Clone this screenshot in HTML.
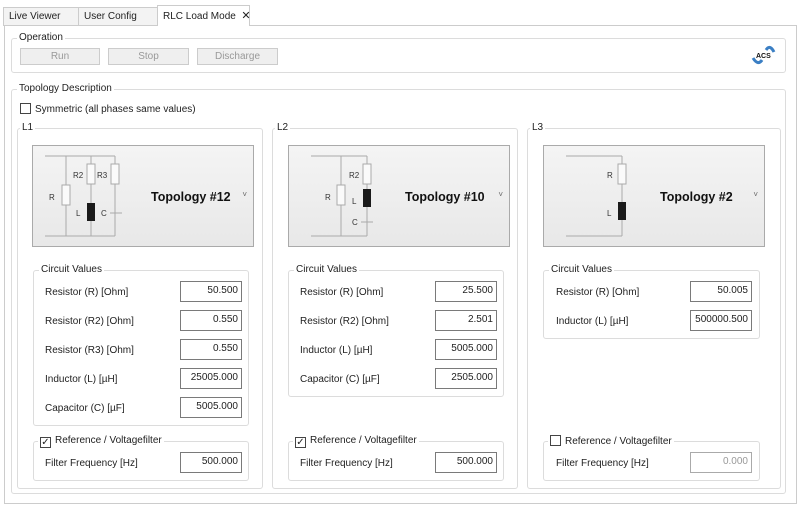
<!DOCTYPE html>
<html><head><meta charset="utf-8"><style>
*{box-sizing:border-box;margin:0;padding:0}
body{width:800px;height:512px;background:#fff;font-family:"Liberation Sans",sans-serif;font-size:10px;color:#222;position:relative;overflow:hidden}
.a{position:absolute}
.tab{position:absolute;top:7px;height:19px;border:1px solid #ccc;border-bottom:none;background:#f3f3f3;padding:3px 0 0 5px;font-size:10px;white-space:nowrap}
.grp{position:absolute;border:1px solid #dcdcdc;border-radius:3px}
.lbl{position:absolute;background:#fff;padding:0 2px;font-size:10px;top:-7px;left:5px;line-height:12px;white-space:nowrap}
.btn{position:absolute;top:48px;height:17px;border:1px solid #ccc;background:#efefef;color:#999;text-align:center;line-height:15px;font-size:10px}
.tb{position:absolute;left:180px;width:62px;height:21px;border:1px solid #7a7a7a;text-align:right;padding:3px 3px 0 0;font-size:10px;background:#fff}
.rl{position:absolute;left:45px;font-size:10px}
.cb{display:inline-block;width:11px;height:11px;border:1px solid #444;vertical-align:-2px;margin-right:4px;position:relative;background:#fff}
.topo{position:absolute;top:145px;width:222px;height:102px;border:1px solid #aaa;background:linear-gradient(#f4f4f4,#e8e8e8)}
.tt{position:absolute;top:44px;font-weight:bold;font-size:12.5px;color:#111;white-space:nowrap}
.chev{position:absolute;right:6px;top:44px;font-size:8px;color:#666}
</style></head><body>
<div class="tab" style="left:3px;width:76px">Live Viewer</div>
<div class="tab" style="left:78px;width:80px">User Config</div>
<div class="tab" style="left:157px;top:5px;height:21px;width:93px;background:#fff;z-index:2">RLC Load Mode&nbsp;&nbsp;<span style="font-size:11px">✕</span></div>
<div class="a" style="left:4px;top:25px;width:793px;height:479px;border:1px solid #ccc"></div>

<div class="grp" style="left:11px;top:38px;width:775px;height:35px"><span class="lbl">Operation</span></div>
<div class="btn" style="left:20px;width:80px">Run</div>
<div class="btn" style="left:108px;width:81px">Stop</div>
<div class="btn" style="left:197px;width:81px">Discharge</div>
<svg class="a" style="left:750px;top:42px" width="28" height="26" viewBox="0 0 28 26">
<path d="M3 16 Q8 24 12 18" stroke="#3b7fc4" stroke-width="3" fill="none"/>
<path d="M16 8 Q20 2 24 10" stroke="#3b7fc4" stroke-width="3" fill="none"/>
<text x="6" y="16" font-size="7" font-weight="bold" font-family="Liberation Sans" fill="#111">ACS</text></svg>

<div class="grp" style="left:11px;top:89px;width:775px;height:405px"><span class="lbl">Topology Description</span></div>
<div class="a" style="left:20px;top:103px"><span class="cb"></span>Symmetric (all phases same values)</div>

<div class="grp" style="left:17px;top:128px;width:246px;height:361px"><span class="lbl" style="left:2px">L1</span></div>
<div class="grp" style="left:272px;top:128px;width:246px;height:361px"><span class="lbl" style="left:2px">L2</span></div>
<div class="grp" style="left:527px;top:128px;width:254px;height:361px"><span class="lbl" style="left:2px">L3</span></div>

<div class="topo" style="left:32px">
<svg class="a" style="left:0;top:0" width="100" height="100" font-family="Liberation Sans" font-size="8" fill="#333">
<g stroke="#aaa" fill="none"><path d="M12 10H82M12 90H82M33 10V90M58 10V90M82 10V90"/>
<rect x="29" y="39" width="8" height="20" fill="#fafafa"/><rect x="54" y="18" width="8" height="20" fill="#fafafa"/><rect x="78" y="18" width="8" height="20" fill="#fafafa"/>
<path d="M77 67H89" fill="none"/></g>
<rect x="54" y="57" width="8" height="18" fill="#1a1a1a"/>
<text x="16" y="54">R</text><text x="40" y="32">R2</text><text x="64" y="32">R3</text><text x="43" y="70">L</text><text x="68" y="70">C</text></svg>
<div class="tt" style="left:118px">Topology #12</div><div class="chev">˅</div></div>

<div class="topo" style="left:288px">
<svg class="a" style="left:0;top:0" width="100" height="100" font-family="Liberation Sans" font-size="8" fill="#333">
<g stroke="#aaa" fill="none"><path d="M22 10H78M22 90H78M52 10V90M78 10V90"/>
<rect x="48" y="39" width="8" height="20" fill="#fafafa"/><rect x="74" y="18" width="8" height="20" fill="#fafafa"/><path d="M72 76H84"/></g>
<rect x="74" y="43" width="8" height="18" fill="#1a1a1a"/>
<text x="36" y="54">R</text><text x="60" y="32">R2</text><text x="63" y="58">L</text><text x="63" y="79">C</text></svg>
<div class="tt" style="left:116px">Topology #10</div><div class="chev">˅</div></div>

<div class="topo" style="left:543px">
<svg class="a" style="left:0;top:0" width="100" height="100" font-family="Liberation Sans" font-size="8" fill="#333">
<g stroke="#aaa" fill="none"><path d="M22 10H78M22 90H78M78 10V90"/>
<rect x="74" y="18" width="8" height="20" fill="#fafafa"/></g>
<rect x="74" y="56" width="8" height="18" fill="#1a1a1a"/>
<text x="63" y="32">R</text><text x="63" y="70">L</text></svg>
<div class="tt" style="left:116px">Topology #2</div><div class="chev">˅</div></div>

<div class="grp" style="left:33px;top:270px;width:216px;height:156px"><span class="lbl">Circuit Values</span></div>
<div class="grp" style="left:288px;top:270px;width:216px;height:127px"><span class="lbl">Circuit Values</span></div>
<div class="grp" style="left:543px;top:270px;width:217px;height:69px"><span class="lbl">Circuit Values</span></div>

<div class="rl" style="top:287px">Resistor (R) [Ohm]</div><div class="tb" style="top:281px">50.500</div>
<div class="rl" style="top:316px">Resistor (R2) [Ohm]</div><div class="tb" style="top:310px">0.550</div>
<div class="rl" style="top:345px">Resistor (R3) [Ohm]</div><div class="tb" style="top:339px">0.550</div>
<div class="rl" style="top:374px">Inductor (L) [µH]</div><div class="tb" style="top:368px">25005.000</div>
<div class="rl" style="top:403px">Capacitor (C) [µF]</div><div class="tb" style="top:397px">5005.000</div>

<div class="rl" style="left:300px;top:287px">Resistor (R) [Ohm]</div><div class="tb" style="left:435px;top:281px">25.500</div>
<div class="rl" style="left:300px;top:316px">Resistor (R2) [Ohm]</div><div class="tb" style="left:435px;top:310px">2.501</div>
<div class="rl" style="left:300px;top:345px">Inductor (L) [µH]</div><div class="tb" style="left:435px;top:339px">5005.000</div>
<div class="rl" style="left:300px;top:374px">Capacitor (C) [µF]</div><div class="tb" style="left:435px;top:368px">2505.000</div>

<div class="rl" style="left:556px;top:287px">Resistor (R) [Ohm]</div><div class="tb" style="left:690px;top:281px">50.005</div>
<div class="rl" style="left:556px;top:316px">Inductor (L) [µH]</div><div class="tb" style="left:690px;top:310px">500000.500</div>

<div class="grp" style="left:33px;top:441px;width:216px;height:40px"><span class="lbl" style="top:-7px;left:4px"><span class="cb" style="line-height:9px;font-size:10px;text-align:center">✓</span>Reference / Voltagefilter</span></div>
<div class="grp" style="left:288px;top:441px;width:216px;height:40px"><span class="lbl" style="top:-7px;left:4px"><span class="cb" style="line-height:9px;font-size:10px;text-align:center">✓</span>Reference / Voltagefilter</span></div>
<div class="grp" style="left:543px;top:441px;width:217px;height:40px"><span class="lbl" style="top:-7px;left:4px"><span class="cb"></span>Reference / Voltagefilter</span></div>
<div class="rl" style="top:458px">Filter Frequency [Hz]</div><div class="tb" style="top:452px">500.000</div>
<div class="rl" style="left:300px;top:458px">Filter Frequency [Hz]</div><div class="tb" style="left:435px;top:452px">500.000</div>
<div class="rl" style="left:556px;top:458px">Filter Frequency [Hz]</div><div class="tb" style="left:690px;top:452px;color:#999;border-color:#aaa">0.000</div>
</body></html>
